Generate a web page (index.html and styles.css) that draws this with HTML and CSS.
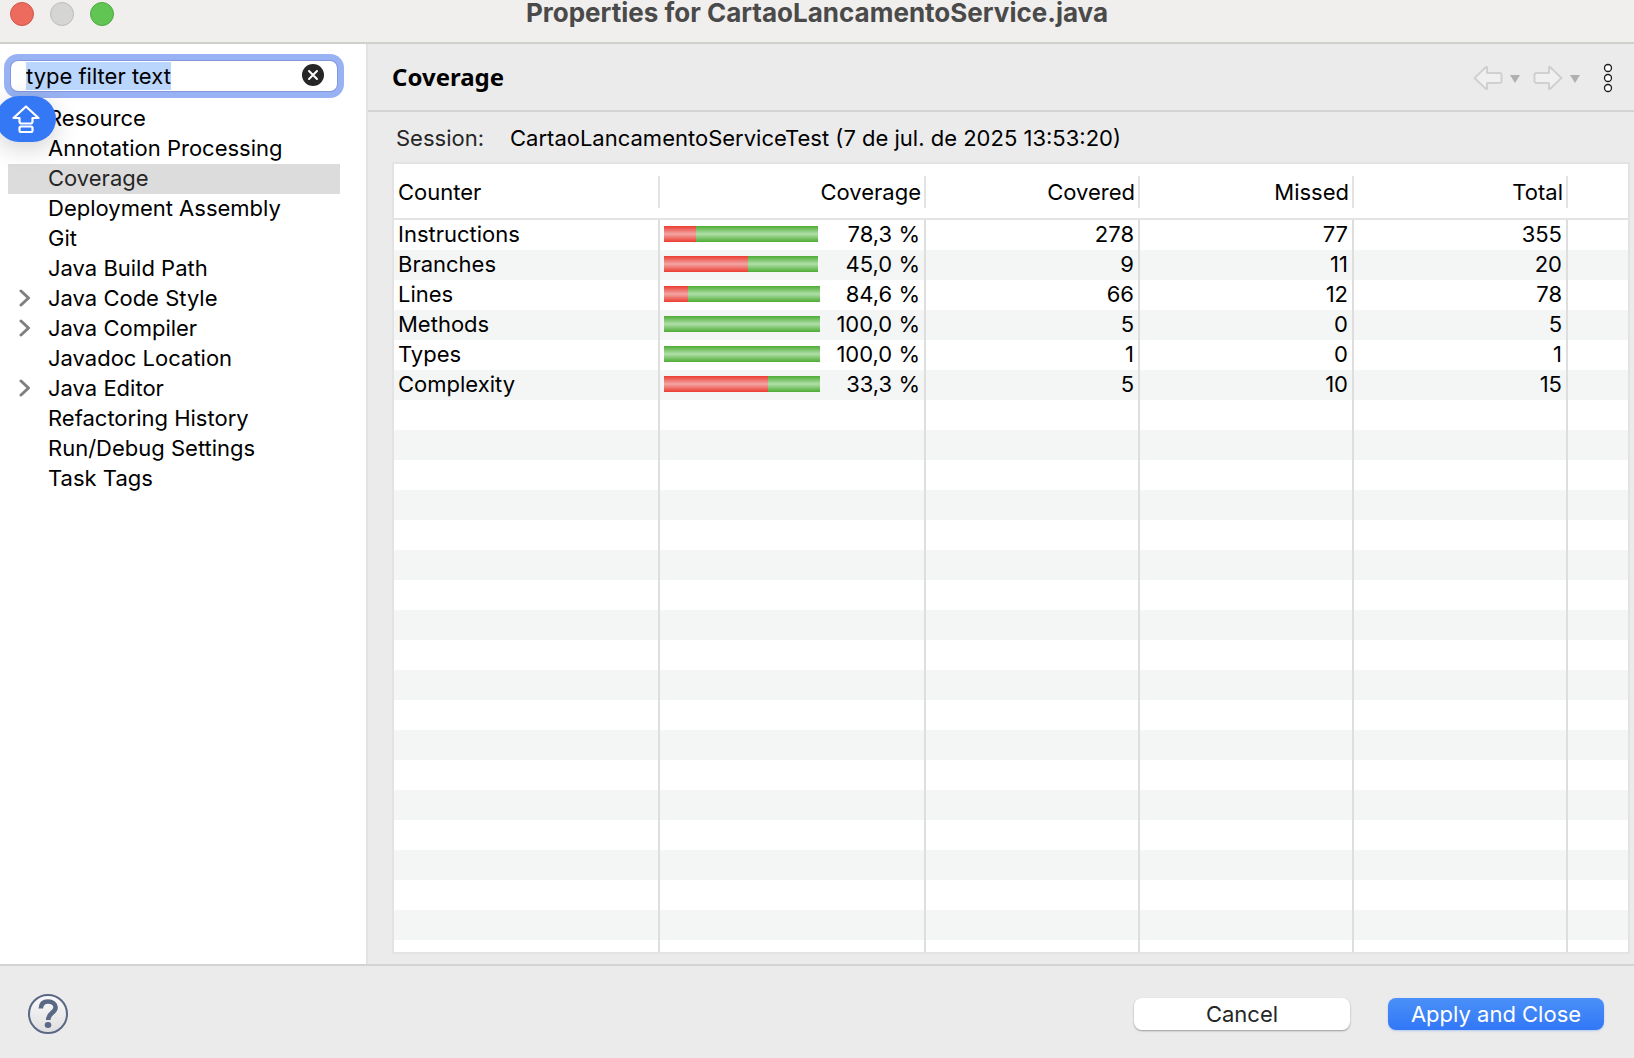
FILE: index.html
```html
<!DOCTYPE html>
<html lang="en">
<head>
<meta charset="utf-8">
<title>Properties for CartaoLancamentoService.java</title>
<link rel="stylesheet" href="styles.css">
</head>
<body>
<div class="window">
  <header class="titlebar">
    <div class="lights">
      <button class="light light-close" type="button" aria-label="Close"></button>
      <button class="light light-min" type="button" aria-label="Minimize" disabled></button>
      <button class="light light-zoom" type="button" aria-label="Zoom"></button>
    </div>
    <h1 class="window-title">Properties for CartaoLancamentoService.java</h1>
  </header>

  <div class="body">
    <nav class="sidebar">
      <div class="search">
        <input class="search-input" id="filter" type="text" value="type filter text" aria-label="Filter" spellcheck="false">
        <button class="search-clear" type="button" aria-label="Clear">
          <svg width="22" height="22" viewBox="0 0 22 22"><circle cx="11" cy="11" r="11" fill="#262626"/><path d="M7 7l8 8M15 7l-8 8" stroke="#fff" stroke-width="2" stroke-linecap="round"/></svg>
        </button>
      </div>
      <div class="caps-badge">
        <svg width="28" height="28" viewBox="0 0 28 28" fill="none" stroke="#fff" stroke-width="2.2" stroke-linejoin="round"><path d="M14 1.5L26.5 13H20.500V16.500Q20.500 18.500 18.500 18.500H9.500Q7.500 18.500 7.500 16.500V13H1.500Z"/><rect x="7.500" y="21.500" width="13" height="5.500" rx="1.500"/></svg>
      </div>
      <ul class="tree">
        <li><a class="node" href="#">Resource</a></li>
        <li><a class="node" href="#">Annotation Processing</a></li>
        <li><a class="node node-selected" href="#">Coverage</a></li>
        <li><a class="node" href="#">Deployment Assembly</a></li>
        <li><a class="node" href="#">Git</a></li>
        <li><a class="node" href="#">Java Build Path</a></li>
        <li><a class="node node-parent" href="#"><svg class="chevron" width="12" height="18" viewBox="0 0 12 18"><path d="M2 2l7.500 7L2 16"/></svg>Java Code Style</a></li>
        <li><a class="node node-parent" href="#"><svg class="chevron" width="12" height="18" viewBox="0 0 12 18"><path d="M2 2l7.500 7L2 16"/></svg>Java Compiler</a></li>
        <li><a class="node" href="#">Javadoc Location</a></li>
        <li><a class="node node-parent" href="#"><svg class="chevron" width="12" height="18" viewBox="0 0 12 18"><path d="M2 2l7.500 7L2 16"/></svg>Java Editor</a></li>
        <li><a class="node" href="#">Refactoring History</a></li>
        <li><a class="node" href="#">Run/Debug Settings</a></li>
        <li><a class="node" href="#">Task Tags</a></li>
      </ul>
    </nav>

    <main class="page">
      <div class="page-head">
        <h2 class="page-title">Coverage</h2>
        <div class="tools">
          <button class="tool" type="button" aria-label="Back" disabled>
            <svg width="30" height="26" viewBox="0 0 30 26"><path class="arrow" d="M1.500 13L13 2H14V8H26.500Q28.500 8 28.500 10V16Q28.500 18 26.500 18H14V24H13Z"/></svg>
          </button>
          <button class="tool" type="button" aria-label="Back history" disabled>
            <svg width="10" height="10" viewBox="0 0 10 10"><path d="M0 2H10L5 10Z" fill="#b0b0b0"/></svg>
          </button>
          <button class="tool tool-forward" type="button" aria-label="Forward" disabled>
            <svg width="30" height="26" viewBox="0 0 30 26"><path class="arrow" d="M28.500 13L17 2H16V8H3.500Q1.500 8 1.500 10V16Q1.500 18 3.500 18H16V24H17Z"/></svg>
          </button>
          <button class="tool" type="button" aria-label="Forward history" disabled>
            <svg width="10" height="10" viewBox="0 0 10 10"><path d="M0 2H10L5 10Z" fill="#b0b0b0"/></svg>
          </button>
          <button class="tool tool-menu" type="button" aria-label="View menu">
            <svg width="10" height="30" viewBox="0 0 10 30" fill="#fff" stroke="#1c1c1c" stroke-width="1.300"><circle cx="5" cy="5" r="3.500"/><circle cx="5" cy="15" r="3.500"/><circle cx="5" cy="25" r="3.500"/></svg>
          </button>
        </div>
      </div>

      <div class="content">
        <div class="session">
          <span class="session-label">Session:</span>
          <span>CartaoLancamentoServiceTest (7 de jul. de 2025 13:53:20)</span>
        </div>
        <div class="table-frame">
          <table class="counters">
            <colgroup><col class="col-wide"><col class="col-wide"><col class="col-num"><col class="col-num"><col class="col-num"><col></colgroup>
            <thead>
              <tr><th scope="col">Counter</th><th scope="col">Coverage</th><th scope="col">Covered</th><th scope="col">Missed</th><th scope="col">Total</th><td></td></tr>
            </thead>
            <tbody>
              <tr><td>Instructions</td><td><div class="ratio"><span class="bar"><i class="missed" style="width:32px"></i><i class="covered" style="width:122px"></i></span>78,3 %</div></td><td>278</td><td>77</td><td>355</td><td></td></tr>
              <tr><td>Branches</td><td><div class="ratio"><span class="bar"><i class="missed" style="width:84px"></i><i class="covered" style="width:70px"></i></span>45,0 %</div></td><td>9</td><td>11</td><td>20</td><td></td></tr>
              <tr><td>Lines</td><td><div class="ratio"><span class="bar"><i class="missed" style="width:24px"></i><i class="covered" style="width:132px"></i></span>84,6 %</div></td><td>66</td><td>12</td><td>78</td><td></td></tr>
              <tr><td>Methods</td><td><div class="ratio"><span class="bar"><i class="covered" style="width:156px"></i></span>100,0 %</div></td><td>5</td><td>0</td><td>5</td><td></td></tr>
              <tr><td>Types</td><td><div class="ratio"><span class="bar"><i class="covered" style="width:156px"></i></span>100,0 %</div></td><td>1</td><td>0</td><td>1</td><td></td></tr>
              <tr><td>Complexity</td><td><div class="ratio"><span class="bar"><i class="missed" style="width:104px"></i><i class="covered" style="width:52px"></i></span>33,3 %</div></td><td>5</td><td>10</td><td>15</td><td></td></tr>
              <tr class="filler"><td></td><td></td><td></td><td></td><td></td><td></td></tr>
            </tbody>
          </table>
        </div>
      </div>
    </main>
  </div>

  <footer class="footer">
    <button class="help" type="button" aria-label="Help">
      <svg width="40" height="40" viewBox="0 0 40 40"><defs><linearGradient id="help-fill" x1="0" y1="0" x2="0" y2="1"><stop offset="0" stop-color="#fafafa"/><stop offset="1" stop-color="#dedede"/></linearGradient></defs><circle cx="20" cy="20" r="19" fill="url(#help-fill)" stroke="#5a6785" stroke-width="2"/><path d="M12.800 14.500C13 9.500 16 7.500 20 7.500C24.500 7.500 27.600 10 27.600 13.500C27.600 19 20.200 18.500 20.200 26" fill="none" stroke="#5a6785" stroke-width="4.600"/><ellipse cx="20" cy="31" rx="3.300" ry="2.900" fill="#5a6785"/></svg>
    </button>
    <div class="actions">
      <button class="btn" type="button">Cancel</button>
      <button class="btn btn-primary" type="button">Apply and Close</button>
    </div>
  </footer>
</div>
<script src="app.js"></script>
</body>
</html>
```
FILE: styles.css
```css
* { box-sizing: border-box; }

body {
  margin: 0;
  font-family: Inter, "Liberation Sans", sans-serif;
  font-size: 22px;
  line-height: 28px;
  color: #000;
  background: #ebebeb;
}

button { font: inherit; border: 0; padding: 0; background: none; color: inherit; }
svg { display: block; }

.window { display: flex; flex-direction: column; height: 100vh; overflow: hidden; }

/* title bar */
.titlebar {
  display: grid;
  grid-template-columns: 1fr auto 1fr;
  flex: none;
  height: 44px;
  padding: 0 10px;
  background: #f0efed;
  border-bottom: 2px solid #d0d0cf;
}
.lights { display: flex; gap: 16px; padding-top: 2px; }
.light { width: 24px; height: 24px; border-radius: 50%; }
.light-close { background: #ec6a5e; border: 1px solid #d35548; }
.light-min { background: #d5d5d4; border: 1px solid #bcbcbb; }
.light-zoom { background: #61c554; border: 1px solid #50a73f; }
.window-title { margin: 0; font-size: 26px; line-height: 26px; font-weight: 700; color: #4a4a4a; white-space: nowrap; }

.body { display: flex; flex: 1; min-height: 0; }

/* sidebar */
.sidebar {
  position: relative;
  flex: none;
  width: 368px;
  padding: 17px 26px 0 8px;
  background: #fff;
  border-right: 2px solid #e3e3e3;
}
.search {
  display: flex;
  align-items: center;
  height: 30px;
  margin: 0 3px;
  padding: 0 13px 0 15px;
  border-radius: 7px;
  background: #fff;
  box-shadow: 0 0 0 1px #8198df, 0 0 0 7px #98b2f3;
}
.search-input {
  flex: 1;
  min-width: 0;
  height: 28px;
  padding: 0;
  border: 0;
  outline: 0;
  font: inherit;
  background: transparent;
}
.search-input::selection { background: #bad6fc; color: #000; }
.search-clear { padding-bottom: 2px; }
.caps-badge {
  position: absolute;
  left: -4px;
  top: 52px;
  display: flex;
  width: 60px;
  height: 46px;
  padding: 9px 0 0 16px;
  border-radius: 23px;
  background: #3478f6;
  box-shadow: 0 6px 24px rgba(0, 0, 0, 0.18);
}
.tree { margin: 13px 0 0; padding: 0; list-style: none; }
.node { display: flex; align-items: center; height: 30px; padding: 0 0 2px 40px; color: #000; text-decoration: none; white-space: nowrap; }
.node-selected { background: #dcdcdc; color: #262626; }
.node-parent { gap: 17px; padding-left: 11px; }
.chevron { fill: none; stroke: #808080; stroke-width: 3; stroke-linecap: round; stroke-linejoin: round; }

/* property page */
.page { display: flex; flex-direction: column; flex: 1; min-width: 0; }
.page-head {
  display: flex;
  align-items: center;
  justify-content: space-between;
  height: 68px;
  padding: 0 21px 0 24px;
  border-bottom: 2px solid #d3d3d3;
}
.page-title { margin: 0; font-family: "Noto Sans", "Open Sans", sans-serif; font-size: 24px; font-weight: 700; }
.tools { display: flex; align-items: center; gap: 7px; padding-top: 2px; }
.tool-forward { margin-left: 6px; }
.tool-menu { margin-left: 16px; }
.arrow { fill: #f0f0f0; stroke: #d0d0d0; stroke-width: 2; stroke-linejoin: round; }

.content { display: flex; flex-direction: column; flex: 1; min-height: 0; padding: 12px 4px 10px 24px; }
.session { display: flex; gap: 26px; margin-bottom: 10px; padding-left: 4px; white-space: nowrap; }
.session-label { color: #262626; }

.table-frame { flex: 1; min-height: 0; background: #fff; border: 2px solid #e3e3e3; }
.counters { width: 100%; height: 100%; table-layout: fixed; border-collapse: separate; border-spacing: 0; }
.col-wide { width: 266px; }
.col-num { width: 214px; }
.counters th {
  height: 56px;
  padding: 2px 5px 0;
  font-weight: 400;
  text-align: right;
  background: linear-gradient(#e3e3e3, #e3e3e3) right 0 top 12px / 2px 32px no-repeat;
}
.counters thead th, .counters thead td { border-bottom: 2px solid #e3e3e3; }
.counters tbody td { height: 30px; padding: 0 4px 2px; text-align: right; border-right: 2px solid #dedede; }
.counters th:first-child, .counters tbody td:first-child { padding-left: 4px; text-align: left; }
.counters tbody td:last-child { border-right: 0; }
.counters tbody tr:nth-child(even) { background: #f4f5f5; }
.counters .filler td {
  height: auto;
  background: repeating-linear-gradient(#fff 0 30px, #f4f5f5 30px 60px);
}

.ratio { display: flex; align-items: center; justify-content: space-between; }
.bar { display: flex; height: 16px; }
.missed { background: linear-gradient(#ea3c30, #f3a5a4 50%, #ea3c30); }
.covered { background: linear-gradient(#4dab35, #b0dfa9 50%, #4dab35); }

/* footer */
.footer {
  display: flex;
  align-items: center;
  justify-content: space-between;
  flex: none;
  padding: 28px 30px 24px 28px;
  border-top: 2px solid #d3d3d3;
}
.actions { display: flex; gap: 38px; }
.btn {
  width: 216px;
  height: 32px;
  border-radius: 8px;
  background: #fff;
  color: #262626;
  box-shadow: 0 1px 2px rgba(0, 0, 0, 0.35);
}
.btn-primary { background: linear-gradient(#4a90f8, #3277f6); color: #fff; box-shadow: 0 1px 2px rgba(50, 119, 246, 0.3); }
```
FILE: app.js
```js
// The filter field opens focused, with its hint text selected.
const filter = document.getElementById('filter');
filter.focus();
filter.select();
```
